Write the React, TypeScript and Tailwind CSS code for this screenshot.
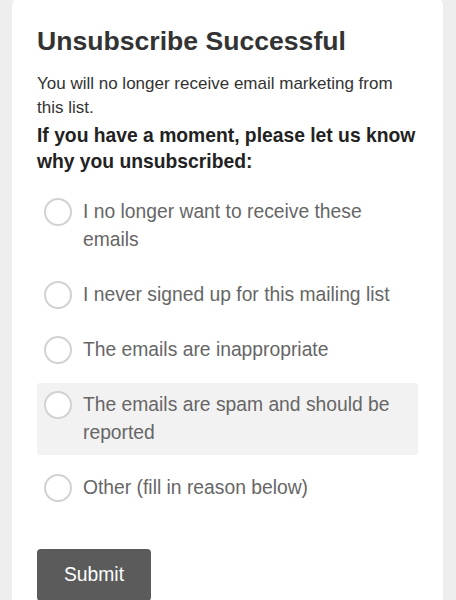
import React, { useState } from 'react';

const reasons = [
  'I no longer want to receive these emails',
  'I never signed up for this mailing list',
  'The emails are inappropriate',
  'The emails are spam and should be reported',
  'Other (fill in reason below)',
];

export default function App() {
  const [hovered] = useState(3);

  return (
    <div
      className="h-[600px] bg-[#eeeeee] overflow-hidden"
      style={{ fontFamily: '"Liberation Sans", Arial, Helvetica, sans-serif' }}
    >
      <div className="ml-[12px] mr-[13px] -mt-[4px] bg-white rounded-[10px] px-[25px] pt-[29px] pb-[30px]">
        <h1 className="text-[26.6px] leading-[32px] font-bold text-[#333333]">
          Unsubscribe Successful
        </h1>

        <p className="mt-[15px] text-[17px] leading-[24px] text-[#333333]">
          You will no longer receive email marketing from this list.
        </p>

        <p className="mt-[3px] text-[19.3px] leading-[26px] font-bold text-[#222222]">
          If you have a moment, please let us know why you unsubscribed:
        </p>

        <div className="mt-[15px] flex flex-col gap-[11px]">
          {reasons.map((reason, i) => (
            <label
              key={reason}
              className={`flex items-start gap-[11px] pl-[7px] pr-2 py-2 rounded-[3px] cursor-pointer ${
                i === hovered ? 'bg-[#f2f2f2]' : ''
              }`}
            >
              <span className="w-[28px] h-[28px] shrink-0 rounded-full border-2 border-[#d2d2d2] bg-white" />
              <span className="text-[19.3px] leading-[28px] text-[#666666]">{reason}</span>
            </label>
          ))}
        </div>

        <button className="mt-[39px] h-[52px] px-[27px] rounded-[4px] bg-[#5b5b5b] text-white text-[19.3px]">
          Submit
        </button>
      </div>
    </div>
  );
}
